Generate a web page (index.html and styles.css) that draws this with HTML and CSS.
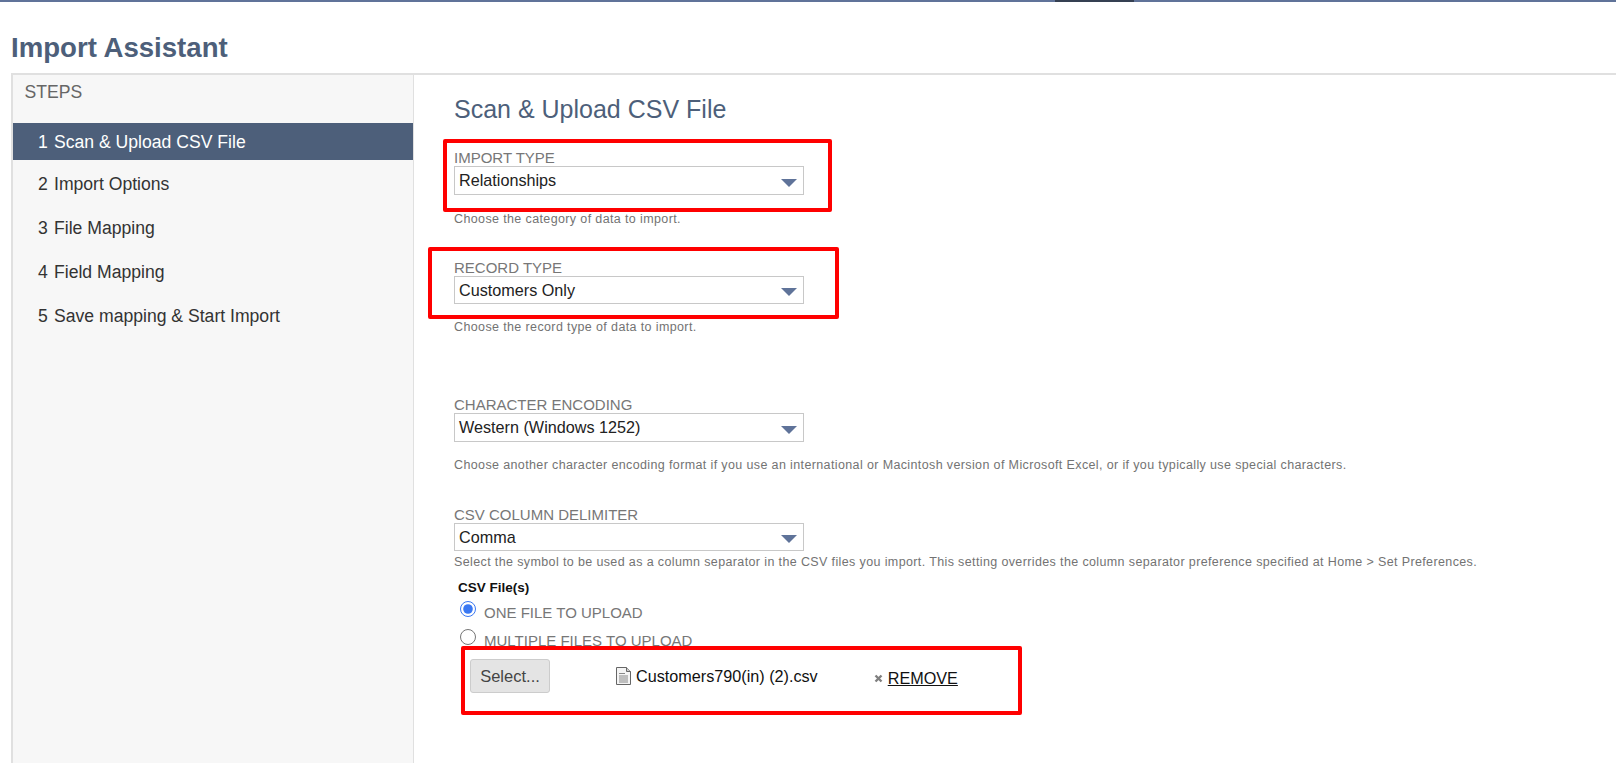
FILE: index.html
```html
<!DOCTYPE html>
<html lang="en">
<head>
<meta charset="utf-8">
<title>Import Assistant</title>
<link rel="stylesheet" href="styles.css">
</head>
<body>
<div class="topbar"><span class="topbar-seg"></span></div>
<h1 class="title">Import Assistant</h1>
<div class="panel">
  <aside class="sidebar">
    <div class="steps-head">STEPS</div>
    <ol class="steps">
      <li class="step active"><span class="num">1</span>Scan &amp; Upload CSV File</li>
      <li class="step"><span class="num">2</span>Import Options</li>
      <li class="step"><span class="num">3</span>File Mapping</li>
      <li class="step"><span class="num">4</span>Field Mapping</li>
      <li class="step"><span class="num">5</span>Save mapping &amp; Start Import</li>
    </ol>
  </aside>
  <main class="main">
    <h2 class="heading">Scan &amp; Upload CSV File</h2>
    <div class="field f1">
      <div class="label">IMPORT TYPE</div>
      <div class="select"><span>Relationships</span><i class="caret"></i></div>
      <p class="help">Choose the category of data to import.</p>
    </div>
    <div class="field f2">
      <div class="label">RECORD TYPE</div>
      <div class="select short"><span>Customers Only</span><i class="caret"></i></div>
      <p class="help">Choose the record type of data to import.</p>
    </div>
    <div class="field f3">
      <div class="label">CHARACTER ENCODING</div>
      <div class="select"><span>Western (Windows 1252)</span><i class="caret"></i></div>
      <p class="help">Choose another character encoding format if you use an international or Macintosh version of Microsoft Excel, or if you typically use special characters.</p>
    </div>
    <div class="field f4">
      <div class="label">CSV COLUMN DELIMITER</div>
      <div class="select short"><span>Comma</span><i class="caret"></i></div>
      <p class="help tight">Select the symbol to be used as a column separator in the CSV files you import. This setting overrides the column separator preference specified at Home &gt; Set Preferences.</p>
    </div>
    <div class="files">
      <div class="files-title">CSV File(s)</div>
      <label class="radio-row"><input type="radio" name="m" checked><span>ONE FILE TO UPLOAD</span></label>
      <label class="radio-row"><input type="radio" name="m"><span>MULTIPLE FILES TO UPLOAD</span></label>
      <div class="upload">
        <button class="select-btn" type="button">Select...</button>
        <span class="file">
          <svg class="file-icon" width="15" height="18" viewBox="0 0 15 18"><path d="M.5.5h10l4 4v13H.5z" fill="#f4f4f4" stroke="#666"/><path d="M10.500.5v4h4" fill="#ccc" stroke="#666"/><path d="M3 6.500h6M3 9h9M3 11h9M3 13h9M3 15h9" stroke="#888"/></svg>
          <span>Customers790(in) (2).csv</span>
        </span>
        <span class="remove">
          <svg class="x-icon" width="9" height="9" viewBox="0 0 9 9"><path d="M1.500 1.500l6 6M7.500 1.500l-6 6" stroke="#808080" stroke-width="2.400"/></svg>
          <span class="remove-text">REMOVE</span>
        </span>
      </div>
    </div>
    <div class="mark m1"></div>
    <div class="mark m2"></div>
    <div class="mark m3"></div>
  </main>
</div>
</body>
</html>
```
FILE: styles.css
```css
* { box-sizing: border-box; }
html, body { margin: 0; height: 100%; overflow: hidden; background: #fff; }
body { font-family: "Liberation Sans", Arial, sans-serif; display: flex; flex-direction: column; }
.topbar { height: 2px; background: #607399; padding-left: 1055px; flex: none; }
.topbar-seg { display: block; width: 79px; height: 2px; background: #354052; }
.title { margin: 0; padding: 31px 0 0 11px; height: 71px; flex: none; font-size: 27.6px; line-height: 30px; font-weight: 700; color: #4d5f7a; }
.panel { flex: 1; display: flex; border-top: 2px solid #e0e0e0; margin-left: 11px; min-height: 0; }
.sidebar { width: 403px; flex: none; background: #f7f7f7; border-left: 2px solid #e0e0e0; border-right: 1px solid #e0e0e0; }
.steps-head { padding: 7px 0 0 11.500px; height: 48px; font-size: 17.600px; line-height: 20px; color: #666; }
.steps { list-style: none; margin: 0; padding: 0; }
.step { height: 44px; padding: 9px 0 0 25px; font-size: 17.600px; line-height: 22px; color: #333; }
.step.active { height: 37px; margin-bottom: 4px; padding-top: 8px; background: #4d5f7a; color: #fff; }
.num { display: inline-block; width: 16px; }
.main { position: relative; flex: 1; padding: 0 0 0 40px; min-width: 0; }
.heading { margin: 0; padding-top: 20px; height: 76px; font-size: 25px; line-height: 28px; font-weight: 400; color: #4d5f7a; }
.field { width: 1200px; }
.label { font-size: 15px; line-height: 14px; height: 15px; color: #777; }
.select { width: 350px; height: 29px; border: 1px solid #c8c8c8; display: flex; align-items: center; justify-content: space-between; padding: 0 6px 0 4px; font-size: 16.200px; color: #222; }
.select.short { height: 28px; }
.caret { width: 0; height: 0; margin-top: 4px; border-left: 8px solid transparent; border-right: 8px solid transparent; border-top: 8px solid #5f7399; }
.help { margin: 16px 0 0; font-size: 12.500px; line-height: 14px; color: #737373; letter-spacing: .375px; white-space: nowrap; }
.help.tight { margin-top: 4px; }
.f1 .help { margin-top: 17px; }
.f2 { margin-top: 35px; }
.f3 { margin-top: 64px; }
.f4 { margin-top: 36px; }
.files { padding-left: 4px; margin-top: 11px; }
.files-title { font-size: 13.500px; line-height: 16px; font-weight: 700; color: #111; }
.radio-row { display: flex; height: 28px; font-size: 15px; color: #777; }
.radio-row input { width: 16px; height: 16px; margin: 5px 8px 0 2px; flex: none; accent-color: #3a78f2; }
.radio-row span { margin-top: 8px; }
.upload { display: flex; padding-left: 12px; margin-top: 7px; }
.select-btn { width: 80px; height: 34px; border: 1px solid #ccc; border-radius: 3px; background: #e4e4e4; font: 16.500px "Liberation Sans", Arial, sans-serif; color: #444; padding: 0; }
.file { display: flex; align-items: center; gap: 5px; height: 34px; margin-left: 66px; font-size: 16.200px; color: #111; }
.remove { display: flex; align-items: center; gap: 5px; height: 38px; margin-left: 56px; font-size: 16.200px; color: #111; }
.remove-text { text-decoration: underline; }
.mark { position: absolute; border: 4px solid #ff0000; border-radius: 2px; pointer-events: none; }
.m1 { left: 29px; top: 64px; width: 389px; height: 73px; }
.m2 { left: 14px; top: 172px; width: 411px; height: 72px; }
.m3 { left: 47px; top: 571px; width: 561px; height: 69px; }
```
